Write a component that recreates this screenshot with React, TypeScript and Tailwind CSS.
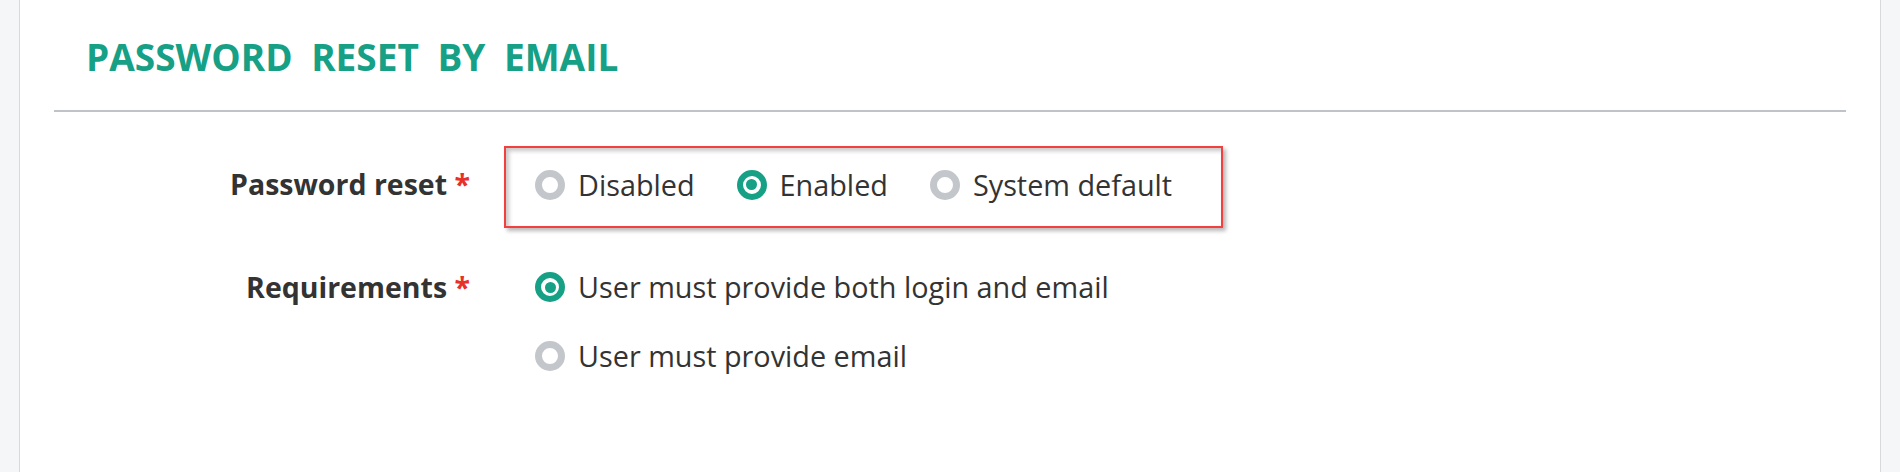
import React from 'react';

type Option = { label: string; checked?: boolean };

const Radio = ({ checked }: { checked?: boolean }) => {
  if (checked) {
    return (
      <span className="flex h-[30px] w-[30px] shrink-0 items-center justify-center rounded-full border-[6px] border-[#16a085] bg-white">
        <span className="h-[11px] w-[11px] rounded-full bg-[#16a085]" />
      </span>
    );
  }
  return <span className="h-[30px] w-[30px] shrink-0 rounded-full border-[7px] border-[#c3c6ca] bg-white" />;
};

const RadioItem = ({ label, checked }: Option) => (
  <label className="flex h-10 items-center gap-[13px] text-[28.8px] text-[#333333]">
    <Radio checked={checked} />
    <span>{label}</span>
  </label>
);

const FieldLabel = ({ children }: { children: React.ReactNode }) => (
  <div className="w-[450px] shrink-0 text-right text-[28.5px] font-bold text-[#333333]">
    {children} <span className="text-[#e8302a]">*</span>
  </div>
);

const resetOptions: Option[] = [
  { label: 'Disabled' },
  { label: 'Enabled', checked: true },
  { label: 'System default' },
];

const requirementOptions: Option[] = [
  { label: 'User must provide both login and email', checked: true },
  { label: 'User must provide email' },
];

const App = () => {
  return (
    <div className="min-h-screen bg-[#f5f6f8] px-[19px] font-['Open_Sans',sans-serif]">
      <div className="min-h-[472px] border-x border-[#d8d9db] bg-white">
        <div className="mx-[34px] border-b-2 border-[#bfc3c7] pl-[32px] pt-[33px] pb-[29px]">
          <h2 className="text-[37px] font-bold uppercase leading-[48px] [word-spacing:9px] text-[#16a085]">
            Password reset by email
          </h2>
        </div>

        <div className="pt-[34px]">
          <div className="flex items-center">
            <div className="pb-[5px]">
              <FieldLabel>Password reset</FieldLabel>
            </div>
            <div className="ml-[34px] flex h-[82px] w-[719px] items-center gap-[42px] border-2 border-[#f23f3f] pb-[5px] pl-[29px] shadow-[3px_3px_4px_rgba(0,0,0,0.28),inset_3px_3px_4px_rgba(0,0,0,0.22)]">
              {resetOptions.map((o) => (
                <RadioItem key={o.label} {...o} />
              ))}
            </div>
          </div>

          <div className="mt-[39px] flex items-start">
            <div className="flex h-10 items-center">
              <FieldLabel>Requirements</FieldLabel>
            </div>
            <div className="ml-[65px] flex flex-col gap-[29px]">
              {requirementOptions.map((o) => (
                <RadioItem key={o.label} {...o} />
              ))}
            </div>
          </div>
        </div>
      </div>
    </div>
  );
};

export default App;
